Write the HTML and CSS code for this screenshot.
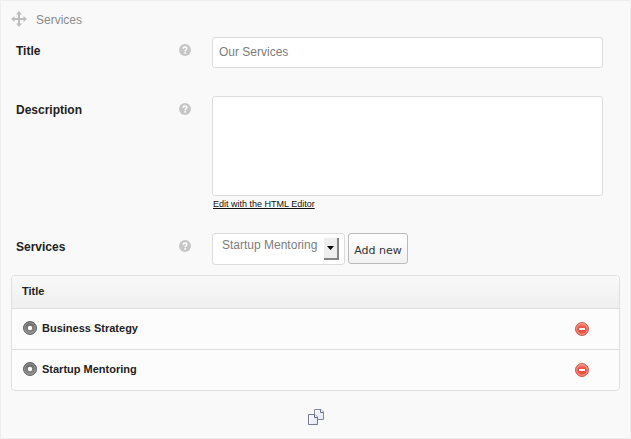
FILE: index.html
```
<!DOCTYPE html>
<html lang="en">
<head>
<meta charset="utf-8">
<title>Services</title>
<link rel="stylesheet" href="styles.css">
</head>
<body>
<svg class="defs" width="0" height="0">
  <defs>
    <linearGradient id="grey" x1="0" y1="0" x2="0" y2="1"><stop offset="0" stop-color="#666"/><stop offset="1" stop-color="#8c8c8c"/></linearGradient>
    <linearGradient id="red" x1="0" y1="0" x2="0" y2="1"><stop offset="0" stop-color="#f08a78"/><stop offset=".5" stop-color="#e84a40"/><stop offset="1" stop-color="#f0604e"/></linearGradient>
    <linearGradient id="page" x1="0" y1="0" x2="1" y2="1"><stop offset="0" stop-color="#fff"/><stop offset="1" stop-color="#e2e5f2"/></linearGradient>
    <symbol id="help" viewBox="0 0 12 12">
      <circle cx="6" cy="6" r="6" fill="#c6c6c6"/>
      <path d="M4.2 4.7C4.2 2.4 7.9 2.5 7.8 4.6C7.7 5.8 6.1 5.8 6.1 7.2" fill="none" stroke="#fff" stroke-width="1.5"/>
      <rect x="5.3" y="8" width="1.6" height="1.6" fill="#fff"/>
    </symbol>
    <symbol id="disc" viewBox="0 0 14 14">
      <circle cx="7" cy="7" r="6.5" fill="url(#grey)" stroke="#666"/>
      <circle cx="7" cy="7" r="5.2" fill="none" stroke="#a0a0a0" stroke-width=".8"/>
      <circle cx="7" cy="7" r="2.2" fill="#fff"/>
    </symbol>
    <symbol id="remove" viewBox="0 0 14 14">
      <circle cx="7" cy="7" r="6.5" fill="url(#red)" stroke="#c9604f"/>
      <circle cx="7" cy="7" r="5.3" fill="none" stroke="#f6a596" stroke-width=".9"/>
      <rect x="4" y="6" width="6" height="2" fill="#fff"/>
    </symbol>
  </defs>
</svg>
<main class="panel">
  <header class="panel-head">
    <svg width="16" height="16" viewBox="0 0 16 16"><path d="M8 0L11 3.5H9V7H12.5V5L16 8L12.5 11V9H9V12.5H11L8 16L5 12.5H7V9H3.5V11L0 8L3.5 5V7H7V3.5H5Z" fill="#bdbdbd"/></svg>
    <span>Services</span>
  </header>
  <section class="field title-field">
    <label>Title</label>
    <svg class="help"><use href="#help"/></svg>
    <div class="box input">Our Services</div>
  </section>
  <section class="field description-field">
    <label>Description</label>
    <svg class="help"><use href="#help"/></svg>
    <div>
      <div class="box textarea"></div>
      <a class="editor-link">Edit with the HTML Editor</a>
    </div>
  </section>
  <section class="field services-field">
    <label>Services</label>
    <svg class="help"><use href="#help"/></svg>
    <div class="controls">
      <div class="box select"><span>Startup Mentoring</span><i class="arrow"><svg width="7" height="4" viewBox="0 0 7 4"><path d="M0 0H7L3.5 4Z"/></svg></i></div>
      <button class="add">Add new</button>
    </div>
  </section>
  <section class="table">
    <div class="table-head">Title</div>
    <div class="row"><svg class="icon"><use href="#disc"/></svg><span class="name">Business Strategy</span><svg class="icon remove"><use href="#remove"/></svg></div>
    <div class="row"><svg class="icon"><use href="#disc"/></svg><span class="name">Startup Mentoring</span><svg class="icon remove"><use href="#remove"/></svg></div>
  </section>
  <footer class="foot">
    <svg width="16" height="16" viewBox="0 0 16 16">
      <path d="M6.5.5H13L15.5 3V10.5H6.5Z" fill="url(#page)" stroke="#858b9b"/>
      <path d="M12.5.5V3.5H15.5" fill="#fff" stroke="#6c7190"/>
      <path d="M.5 5.5H7L9.5 8V15.5H.5Z" fill="url(#page)" stroke="#747c8b"/>
      <path d="M6.5 5.5V8.5H9.5" fill="#fff" stroke="#5c618a"/>
    </svg>
  </footer>
</main>
</body>
</html>
```
FILE: styles.css
```
* { box-sizing: border-box; }
body { margin: 0; background: #f9f9f9; font: 12px/14px "Liberation Sans", Arial, sans-serif; color: #222; }
.defs { display: block; }
svg { display: block; flex: none; }
.panel { height: 439px; border: 1px solid #eee; padding: 10px 10px 0; background: #f9f9f9; }
.panel-head { display: flex; height: 26px; color: #8c8c8c; line-height: 18px; }
.panel-head span { margin-left: 9px; }
.field { display: grid; grid-template-columns: 163px 33px 391px; margin-left: 5px; align-items: start; }
.field label { font-weight: bold; padding-top: 7px; }
.help { width: 12px; height: 12px; margin-top: 7px; }
.box { background: #fff; border: 1px solid #dcdcdc; border-radius: 3px; color: #7d7d7d; }
.title-field { height: 59px; }
.description-field { height: 137px; }
.services-field { height: 42px; }
.input { height: 31px; padding: 7px 6px; }
.textarea { height: 100px; }
.editor-link { display: block; margin: 2px 0 0 1px; font-size: 9px; line-height: 12px; color: #111; text-decoration: underline; }
.controls { display: flex; gap: 3px; }
.select { display: flex; justify-content: space-between; width: 133px; height: 32px; padding: 4px 5px 0 9px; }
.arrow { display: flex; align-items: center; justify-content: center; width: 15px; height: 22px; background: #eee; border: solid #858585; border-width: 0 2px 2px 0; }
.add { width: 60px; height: 31px; padding: 3px 0 0; border: 1px solid #bbb; border-radius: 3px; background: linear-gradient(#fff, #f1f1f1); font: 11px "DejaVu Sans", Verdana, sans-serif; color: #333; white-space: nowrap; }
.table { height: 116px; border: 1px solid #dfdfdf; border-radius: 4px; background: #fcfcfc; font-size: 11px; font-weight: bold; overflow: hidden; }
.table-head { height: 33px; padding: 8px 10px; border-bottom: 1px solid #dfdfdf; background: linear-gradient(#f9f9f9, #efefef); }
.row { display: flex; height: 40px; padding: 12px 30px 0 11px; }
.row + .row { height: 41px; border-top: 1px solid #dfdfdf; }
.icon { width: 14px; height: 14px; }
.remove { margin-top: 1px; }
.name { flex: 1; margin-left: 5px; }
.foot { display: flex; justify-content: center; padding-top: 18px; }
```
